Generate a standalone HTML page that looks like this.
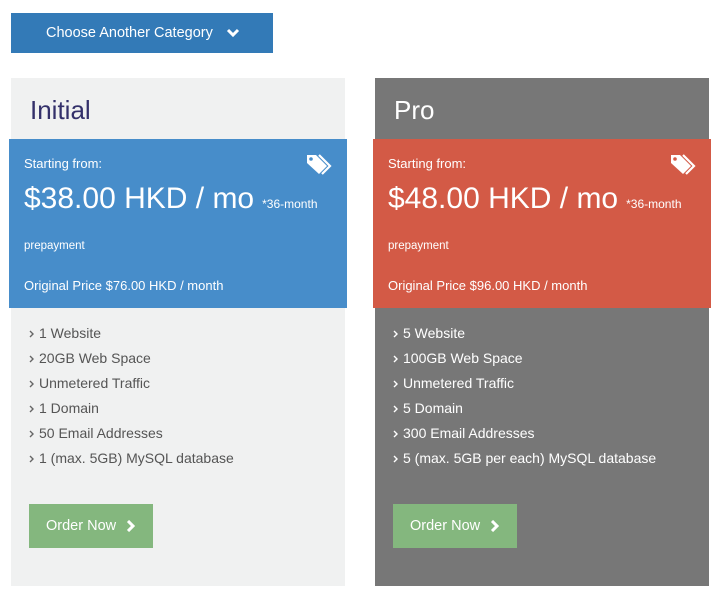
<!DOCTYPE html>
<html><head><meta charset="utf-8"><style>
*{margin:0;padding:0;box-sizing:border-box}
body{width:720px;height:598px;background:#fff;font-family:"Liberation Sans",sans-serif;position:relative;overflow:hidden}
.cat{position:absolute;left:11px;top:13px;width:262px;height:40px;background:#337ab7;color:#fff;font-size:14.5px;line-height:40px;padding-left:35px}
.cat svg{position:absolute;left:215px;top:15px}
.card{position:absolute;top:78px;width:334px;height:508px}
.c1{left:11px;background:#f0f1f1}
.c2{left:375px;background:#777}
.title{position:absolute;left:19px;top:17px;font-size:26px;font-weight:300}
.c1 .title{color:#33306a}
.c2 .title{color:#fff}
.band{position:absolute;left:-2px;top:61px;width:338px;height:169px;color:#fff}
.c1 .band{background:#478dca}
.c2 .band{background:#d35a46}
.sf{position:absolute;left:15px;top:17px;font-size:13px}
.pr{position:absolute;left:15px;top:43px;font-size:30px;white-space:nowrap}
.pr small{font-size:12px;margin-left:8px}
.pp{position:absolute;left:15px;top:101px;font-size:11.5px}
.op{position:absolute;left:15px;top:139px;font-size:13px}
.tag{position:absolute;right:14px;top:14px}
ul{position:absolute;left:18px;top:243px;list-style:none;font-size:14px;line-height:25px}
.c1 ul{color:#555}
.c2 ul{color:#fff}
li{position:relative;padding-left:10px}
li svg{position:absolute;left:0;top:9px}
.btn{position:absolute;left:18px;top:426px;width:124px;height:44px;background:#84b77e;color:#fff;font-size:14.5px;line-height:44px;padding-left:17px}
.btn svg{position:absolute;left:97px;top:16px}
</style></head><body>
<div class="cat">Choose Another Category<svg width="14" height="10" viewBox="0 0 14 10"><path d="M2 2l5 5 5-5" stroke="#fff" stroke-width="3" fill="none"/></svg></div>

<div class="card c1"><div class="title">Initial</div>
<div class="band"><div class="sf">Starting from:</div>
<svg class="tag" width="28" height="24" viewBox="0 0 28 24"><path d="M2 2h9l11 11-8 8L2 10z" fill="#fff"/><circle cx="6" cy="6" r="1.8" fill="#478dca"/><path d="M14 2l11 11-8 8" stroke="#fff" stroke-width="2.2" fill="none"/></svg>
<div class="pr">$38.00 HKD / mo<small>*36-month</small></div>
<div class="pp">prepayment</div>
<div class="op">Original Price $76.00 HKD / month</div></div>
<ul>
<li><svg width="5" height="8" viewBox="0 0 5 8"><path d="M1 1l3 3-3 3" stroke="#666" stroke-width="1.4" fill="none"/></svg>1 Website</li>
<li><svg width="5" height="8" viewBox="0 0 5 8"><path d="M1 1l3 3-3 3" stroke="#666" stroke-width="1.4" fill="none"/></svg>20GB Web Space</li>
<li><svg width="5" height="8" viewBox="0 0 5 8"><path d="M1 1l3 3-3 3" stroke="#666" stroke-width="1.4" fill="none"/></svg>Unmetered Traffic</li>
<li><svg width="5" height="8" viewBox="0 0 5 8"><path d="M1 1l3 3-3 3" stroke="#666" stroke-width="1.4" fill="none"/></svg>1 Domain</li>
<li><svg width="5" height="8" viewBox="0 0 5 8"><path d="M1 1l3 3-3 3" stroke="#666" stroke-width="1.4" fill="none"/></svg>50 Email Addresses</li>
<li><svg width="5" height="8" viewBox="0 0 5 8"><path d="M1 1l3 3-3 3" stroke="#666" stroke-width="1.4" fill="none"/></svg>1 (max. 5GB) MySQL database</li></ul>
<div class="btn">Order Now<svg width="9" height="12" viewBox="0 0 9 12"><path d="M2 1l5 5-5 5" stroke="#fff" stroke-width="3" fill="none"/></svg></div></div>

<div class="card c2"><div class="title">Pro</div>
<div class="band"><div class="sf">Starting from:</div>
<svg class="tag" width="28" height="24" viewBox="0 0 28 24"><path d="M2 2h9l11 11-8 8L2 10z" fill="#fff"/><circle cx="6" cy="6" r="1.8" fill="#d35a46"/><path d="M14 2l11 11-8 8" stroke="#fff" stroke-width="2.2" fill="none"/></svg>
<div class="pr">$48.00 HKD / mo<small>*36-month</small></div>
<div class="pp">prepayment</div>
<div class="op">Original Price $96.00 HKD / month</div></div>
<ul>
<li><svg width="5" height="8" viewBox="0 0 5 8"><path d="M1 1l3 3-3 3" stroke="#fff" stroke-width="1.4" fill="none"/></svg>5 Website</li>
<li><svg width="5" height="8" viewBox="0 0 5 8"><path d="M1 1l3 3-3 3" stroke="#fff" stroke-width="1.4" fill="none"/></svg>100GB Web Space</li>
<li><svg width="5" height="8" viewBox="0 0 5 8"><path d="M1 1l3 3-3 3" stroke="#fff" stroke-width="1.4" fill="none"/></svg>Unmetered Traffic</li>
<li><svg width="5" height="8" viewBox="0 0 5 8"><path d="M1 1l3 3-3 3" stroke="#fff" stroke-width="1.4" fill="none"/></svg>5 Domain</li>
<li><svg width="5" height="8" viewBox="0 0 5 8"><path d="M1 1l3 3-3 3" stroke="#fff" stroke-width="1.4" fill="none"/></svg>300 Email Addresses</li>
<li><svg width="5" height="8" viewBox="0 0 5 8"><path d="M1 1l3 3-3 3" stroke="#fff" stroke-width="1.4" fill="none"/></svg>5 (max. 5GB per each) MySQL database</li></ul>
<div class="btn">Order Now<svg width="9" height="12" viewBox="0 0 9 12"><path d="M2 1l5 5-5 5" stroke="#fff" stroke-width="3" fill="none"/></svg></div></div>
</body></html>
